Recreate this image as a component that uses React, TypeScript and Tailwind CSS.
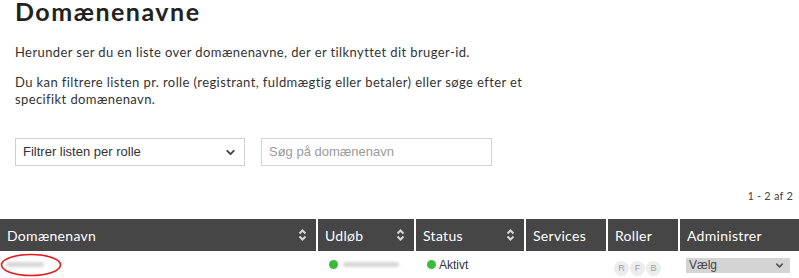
import { ChevronDown } from "lucide-react";

function SortIcon() {
  return (
    <svg width="9" height="12" viewBox="0 0 9 12" className="flex-shrink-0">
      <polyline points="1.5,4.5 4.5,1.5 7.5,4.5" fill="none" stroke="#d8d8d8" strokeWidth="2" />
      <polyline points="1.5,7.5 4.5,10.5 7.5,7.5" fill="none" stroke="#d8d8d8" strokeWidth="2" />
    </svg>
  );
}

interface HeadCellProps {
  label: string;
  width: string;
  sortable?: boolean;
}

function HeadCell({ label, width, sortable }: HeadCellProps) {
  return (
    <div className={`${width} h-8 bg-[#464646] flex items-center justify-between pl-[7px] pr-[9px] flex-shrink-0`}>
      <span className="text-white text-[14px] tracking-[0.3px]">{label}</span>
      {sortable && <SortIcon />}
    </div>
  );
}

function Blur({ w }: { w: string }) {
  return <div className={`${w} h-[5px] rounded-full bg-[#d6d6d6] blur-[1.5px]`} />;
}

export default function App() {
  return (
    <div className="w-[799px] h-[278px] bg-white overflow-hidden font-['Lato',sans-serif] text-[#333]">
      <div className="px-[15px] pt-[1px]">
        <h1 className="text-[25px] font-bold text-[#222] leading-[28px] -mt-[4px] tracking-[1.5px]">Domænenavne</h1>
        <p className="mt-[19px] text-[13px] leading-[17px] tracking-[0.4px]">
          Herunder ser du en liste over domænenavne, der er tilknyttet dit bruger-id.
        </p>
        <p className="mt-[13px] text-[13px] leading-[17px] tracking-[0.4px] w-[530px]">
          Du kan filtrere listen pr. rolle (registrant, fuldmægtig eller betaler) eller søge efter et specifikt
          domænenavn.
        </p>

        <div className="mt-[30px] flex gap-4 font-['Liberation_Sans',Arial,sans-serif] text-[13px]">
          <div className="w-[230px] h-[28px] border border-[#cfcfcf] flex items-center justify-between pl-[7px] pr-[7px]">
            <span className="text-[#333]">Filtrer listen per rolle</span>
            <ChevronDown style={{ width: 13, height: 13 }} strokeWidth={3.5} className="text-[#444]" />
          </div>
          <div className="w-[231px] h-[28px] border border-[#d4d4d4] flex items-center pl-[7px]">
            <span className="text-[#9a9a9a]">Søg på domænenavn</span>
          </div>
        </div>
      </div>

      <div className="mt-[23px] flex justify-end pr-[6px] text-[11px] text-[#444] leading-[14px] tracking-[0.2px]">1 - 2 af 2</div>

      <div className="mt-[16px] flex gap-[2px]">
        <HeadCell label="Domænenavn" width="w-[316px]" sortable />
        <HeadCell label="Udløb" width="w-[96px]" sortable />
        <HeadCell label="Status" width="w-[108px]" sortable />
        <HeadCell label="Services" width="w-[80px]" />
        <HeadCell label="Roller" width="w-[70px]" />
        <HeadCell label="Administrer" width="w-[119px]" />
      </div>

      <div className="flex gap-[2px] h-[26px]">
        <div className="w-[316px] relative flex items-center pl-[6px]">
          <Blur w="w-[38px]" />
          <svg width="62" height="24" viewBox="0 0 62 24" className="absolute left-0 top-[2px]">
            <ellipse cx="31" cy="12" rx="29.5" ry="10.5" fill="none" stroke="#e0191d" strokeWidth="1.6" />
          </svg>
        </div>
        <div className="w-[96px] flex items-center pl-[11px] gap-[5px]">
          <span className="w-[9px] h-[9px] rounded-full bg-[#3bba3b] flex-shrink-0" />
          <Blur w="w-[56px]" />
        </div>
        <div className="w-[108px] flex items-start pt-[7px] pl-[11px] gap-[3px]">
          <span className="w-[9px] h-[9px] mt-[2px] rounded-full bg-[#3bba3b] flex-shrink-0" />
          <span className="text-[12px] text-[#333] font-['Liberation_Sans',Arial,sans-serif] leading-[15px]">Aktivt</span>
        </div>
        <div className="w-[80px]" />
        <div className="w-[70px] flex items-end pb-[1px] pl-[6px] gap-[1px]">
          {["R", "F", "B"].map((r) => (
            <span
              key={r}
              className="w-[15px] h-[15px] rounded-full bg-[#ececec] text-[#a0a0a0] text-[9px] flex items-center justify-center font-['Liberation_Sans',Arial,sans-serif]"
            >
              {r}
            </span>
          ))}
        </div>
        <div className="w-[119px] flex items-start pt-[7px] pl-[6px]">
          <div className="w-[104px] h-[15px] bg-[#d4d4d4] flex items-center justify-between pl-[3px] pr-[5px]">
            <span className="text-[12px] text-[#444] leading-[15px] font-['Liberation_Sans',Arial,sans-serif]">Vælg</span>
            <ChevronDown style={{ width: 11, height: 11 }} strokeWidth={3.5} className="text-[#555]" />
          </div>
        </div>
      </div>
    </div>
  );
}
